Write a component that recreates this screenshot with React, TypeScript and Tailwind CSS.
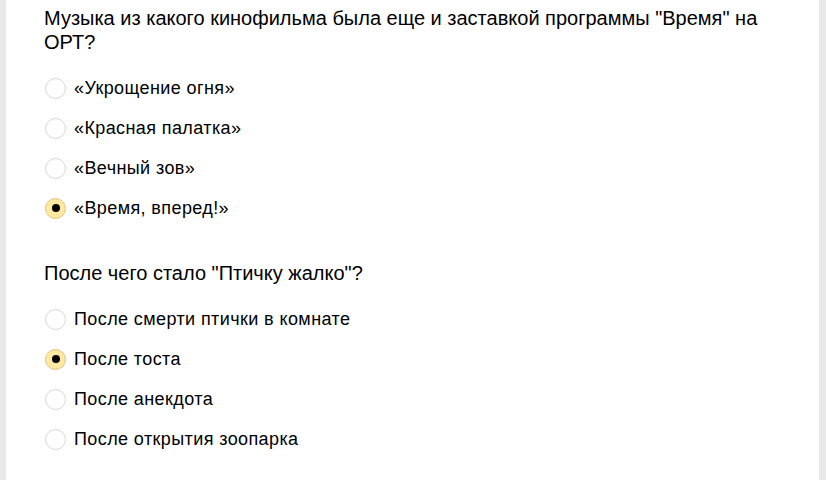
import React from "react";

type Q = { title: string; options: string[]; checked: number };

const questions: Q[] = [
  {
    title:
      'Музыка из какого кинофильма была еще и заставкой программы "Время" на ОРТ?',
    options: ["«Укрощение огня»", "«Красная палатка»", "«Вечный зов»", "«Время, вперед!»"],
    checked: 3,
  },
  {
    title: 'После чего стало "Птичку жалко"?',
    options: [
      "После смерти птички в комнате",
      "После тоста",
      "После анекдота",
      "После открытия зоопарка",
    ],
    checked: 1,
  },
];

function Radio({ on }: { on: boolean }) {
  return on ? (
    <span className="flex h-[21px] w-[21px] shrink-0 items-center justify-center rounded-full border border-[#dcc57a] bg-[#ffe9a3]">
      <span className="h-[8px] w-[8px] rounded-full bg-black" />
    </span>
  ) : (
    <span className="h-[21px] w-[21px] shrink-0 rounded-full border border-[#d6d6d6] bg-white" />
  );
}

export default function App() {
  return (
    <div
      className="flex h-[480px] w-[826px] bg-[#e9e9e9]"
      style={{ fontFamily: '"Liberation Sans", Arial, sans-serif' }}
    >
      <div className="ml-[6px] mr-[7px] flex-1 bg-white pl-[38px] pr-[40px] pt-[6px] text-black">
        {questions.map((q, qi) => (
          <div key={qi} className={qi === 0 ? "" : "mt-[33px]"}>
            <div className="text-[20px] leading-[24px]">{q.title}</div>
            <div className="mt-[14px] flex flex-col">
              {q.options.map((o, oi) => (
                <label key={oi} className="flex h-[40px] items-center gap-[8px] pl-[1px]">
                  <Radio on={oi === q.checked} />
                  <span className="text-[18px] leading-[20px] tracking-[0.4px]">{o}</span>
                </label>
              ))}
            </div>
          </div>
        ))}
      </div>
    </div>
  );
}
